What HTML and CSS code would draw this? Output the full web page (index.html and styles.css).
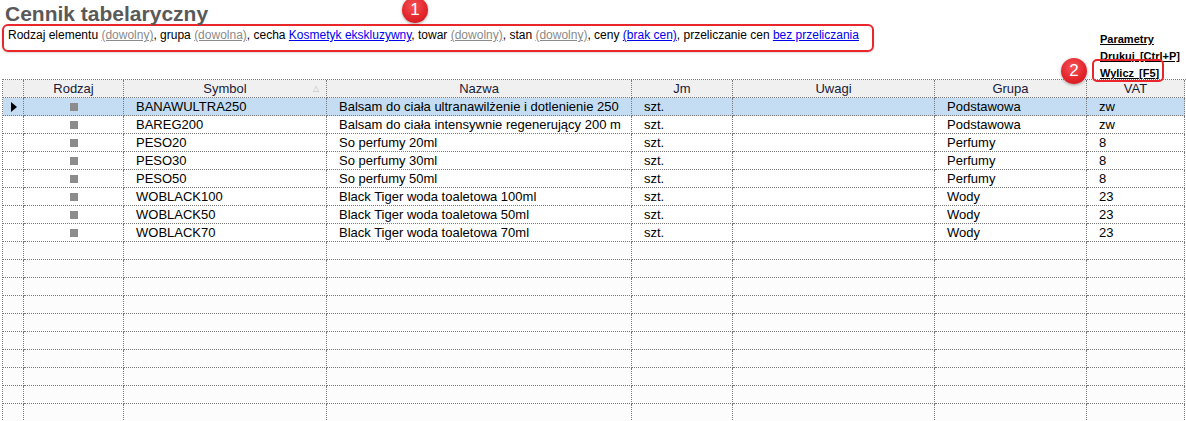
FILE: index.html
```html
<!DOCTYPE html>
<html>
<head>
<meta charset="utf-8">
<link rel="stylesheet" href="styles.css">
</head>
<body>
<div class="top">
  <div class="left">
    <div class="title">Cennik tabelaryczny</div>
    <div class="filters">Rodzaj elementu <a class="gray">(dowolny)</a>, grupa <a class="gray">(dowolna)</a>, cecha <a class="blue">Kosmetyk ekskluzywny</a>, towar <a class="gray">(dowolny)</a>, stan <a class="gray">(dowolny)</a>, ceny <a class="blue">(brak cen)</a>, przeliczanie cen <a class="blue">bez przeliczania</a></div>
  </div>
  <div class="links">
    <a>Parametry</a>
    <a>Drukuj [Ctrl+P]</a>
    <a class="boxed">Wylicz [F5]</a>
  </div>
  <span class="badge b1">1</span>
  <span class="badge b2">2</span>
</div>
<div class="grid">
  <div class="row head">
    <div class="c"></div><div class="c ctr">Rodzaj</div><div class="c ctr sort">Symbol<span class="arrow">△</span></div><div class="c ctr">Nazwa</div><div class="c ctr">Jm</div><div class="c ctr">Uwagi</div><div class="c ctr">Grupa</div><div class="c ctr">VAT</div>
  </div>
  <div class="row data sel">
    <div class="c ind"><span class="tri"></span></div><div class="c ctr"><span class="sq"></span></div><div class="c">BANAWULTRA250</div><div class="c">Balsam do ciała ultranawilżenie i dotlenienie 250</div><div class="c">szt.</div><div class="c"></div><div class="c">Podstawowa</div><div class="c">zw</div>
  </div>
  <div class="row data">
    <div class="c"></div><div class="c ctr"><span class="sq"></span></div><div class="c">BAREG200</div><div class="c">Balsam do ciała intensywnie regenerujący 200 m</div><div class="c">szt.</div><div class="c"></div><div class="c">Podstawowa</div><div class="c">zw</div>
  </div>
  <div class="row data">
    <div class="c"></div><div class="c ctr"><span class="sq"></span></div><div class="c">PESO20</div><div class="c">So perfumy 20ml</div><div class="c">szt.</div><div class="c"></div><div class="c">Perfumy</div><div class="c">8</div>
  </div>
  <div class="row data">
    <div class="c"></div><div class="c ctr"><span class="sq"></span></div><div class="c">PESO30</div><div class="c">So perfumy 30ml</div><div class="c">szt.</div><div class="c"></div><div class="c">Perfumy</div><div class="c">8</div>
  </div>
  <div class="row data">
    <div class="c"></div><div class="c ctr"><span class="sq"></span></div><div class="c">PESO50</div><div class="c">So perfumy 50ml</div><div class="c">szt.</div><div class="c"></div><div class="c">Perfumy</div><div class="c">8</div>
  </div>
  <div class="row data">
    <div class="c"></div><div class="c ctr"><span class="sq"></span></div><div class="c">WOBLACK100</div><div class="c">Black Tiger woda toaletowa 100ml</div><div class="c">szt.</div><div class="c"></div><div class="c">Wody</div><div class="c">23</div>
  </div>
  <div class="row data">
    <div class="c"></div><div class="c ctr"><span class="sq"></span></div><div class="c">WOBLACK50</div><div class="c">Black Tiger woda toaletowa 50ml</div><div class="c">szt.</div><div class="c"></div><div class="c">Wody</div><div class="c">23</div>
  </div>
  <div class="row data">
    <div class="c"></div><div class="c ctr"><span class="sq"></span></div><div class="c">WOBLACK70</div><div class="c">Black Tiger woda toaletowa 70ml</div><div class="c">szt.</div><div class="c"></div><div class="c">Wody</div><div class="c">23</div>
  </div>
  <div class="row empty"><div class="c"></div><div class="c"></div><div class="c"></div><div class="c"></div><div class="c"></div><div class="c"></div><div class="c"></div><div class="c"></div></div>
  <div class="row empty"><div class="c"></div><div class="c"></div><div class="c"></div><div class="c"></div><div class="c"></div><div class="c"></div><div class="c"></div><div class="c"></div></div>
  <div class="row empty"><div class="c"></div><div class="c"></div><div class="c"></div><div class="c"></div><div class="c"></div><div class="c"></div><div class="c"></div><div class="c"></div></div>
  <div class="row empty"><div class="c"></div><div class="c"></div><div class="c"></div><div class="c"></div><div class="c"></div><div class="c"></div><div class="c"></div><div class="c"></div></div>
  <div class="row empty"><div class="c"></div><div class="c"></div><div class="c"></div><div class="c"></div><div class="c"></div><div class="c"></div><div class="c"></div><div class="c"></div></div>
  <div class="row empty"><div class="c"></div><div class="c"></div><div class="c"></div><div class="c"></div><div class="c"></div><div class="c"></div><div class="c"></div><div class="c"></div></div>
  <div class="row empty"><div class="c"></div><div class="c"></div><div class="c"></div><div class="c"></div><div class="c"></div><div class="c"></div><div class="c"></div><div class="c"></div></div>
  <div class="row empty"><div class="c"></div><div class="c"></div><div class="c"></div><div class="c"></div><div class="c"></div><div class="c"></div><div class="c"></div><div class="c"></div></div>
  <div class="row empty"><div class="c"></div><div class="c"></div><div class="c"></div><div class="c"></div><div class="c"></div><div class="c"></div><div class="c"></div><div class="c"></div></div>
  <div class="row empty"><div class="c"></div><div class="c"></div><div class="c"></div><div class="c"></div><div class="c"></div><div class="c"></div><div class="c"></div><div class="c"></div></div>
  <div class="row empty"><div class="c"></div><div class="c"></div><div class="c"></div><div class="c"></div><div class="c"></div><div class="c"></div><div class="c"></div><div class="c"></div></div>
</div>
</body>
</html>
```
FILE: styles.css
```css
html, body {
  margin: 0;
  padding: 0;
  background: #ffffff;
  font-family: "Liberation Sans", Arial, sans-serif;
  overflow: hidden;
}
.top {
  position: relative;
  height: 79px;
  display: flex;
  justify-content: space-between;
}
.left {
  padding-left: 2px;
}
.title {
  font-size: 21px;
  font-weight: bold;
  color: #595959;
  line-height: 20px;
  padding: 4px 0 0 3px;
  height: 20px;
}
.filters {
  width: 864px;
  height: 24px;
  box-sizing: content-box;
  border: 2px solid #e8262b;
  border-radius: 6px;
  font-size: 12px;
  line-height: 18px;
  padding: 0 0 0 4px;
  color: #000;
  box-shadow: 0 1px 2px rgba(0,0,0,0.15);
}
.filters a {
  text-decoration: underline;
}
.gray { color: #8a8a8a; }
.blue { color: #0000ee; }
.links {
  display: flex;
  flex-direction: column;
  width: 86px;
  padding-top: 31px;
}
.links a {
  font-size: 11px;
  font-weight: bold;
  text-decoration: underline;
  color: #000;
  line-height: 17px;
  height: 17px;
  white-space: nowrap;
  word-spacing: 2px;
}
.links a.boxed {
  align-self: flex-start;
}
.boxed {
  position: relative;
}
.boxed::before {
  content: "";
  position: absolute;
  left: -8px;
  top: -6px;
  width: 68px;
  height: 19px;
  border: 2px solid #e8262b;
  border-radius: 5px;
}
.badge {
  position: absolute;
  width: 26px;
  height: 26px;
  border-radius: 50%;
  background: radial-gradient(circle at 45% 35%, #f5555a 0%, #e3262c 55%, #c8151b 100%);
  color: #fff;
  font-size: 17px;
  line-height: 26px;
  text-align: center;
  box-shadow: 0 1px 3px rgba(0,0,0,0.35);
}
.b1 { left: 402px; top: -3px; }
.b2 { left: 1061px; top: 58px; }
.grid {
  margin-left: 2px;
  width: 1183px;
  border-left: 1px dotted #7a7a7a;
  border-top: 1px dotted #7a7a7a;
}
.row {
  display: grid;
  grid-template-columns: 21px 100px 203px 305px 101px 202px 152px 98px;
  height: 18px;
}
.c {
  box-sizing: border-box;
  height: 18px;
  border-right: 1px dotted #7a7a7a;
  border-bottom: 1px dotted #7a7a7a;
  font-size: 13px;
  line-height: 17px;
  padding-left: 12px;
  white-space: nowrap;
  overflow: hidden;
  color: #000;
}
.head .c {
  background: #f0f0f0;
  color: #1a1a3a;
  padding-left: 0;
}
.ctr {
  text-align: center;
  padding-left: 0;
}
.sort {
  position: relative;
}
.arrow {
  position: absolute;
  right: 7px;
  top: 0;
  font-size: 8px;
  color: #c0c0c0;
}
.data .c { background: #ffffff; }
.sel .c { background: #c4ddf3; }
.empty .c { background: #fcfcfc; }
.ind {
  padding-left: 8px !important;
  display: flex;
  align-items: center;
}
.tri {
  width: 0;
  height: 0;
  border-left: 6px solid #000;
  border-top: 5px solid transparent;
  border-bottom: 5px solid transparent;
}
.sq {
  display: inline-block;
  width: 8px;
  height: 8px;
  background: #8c8c8c;
}
```
